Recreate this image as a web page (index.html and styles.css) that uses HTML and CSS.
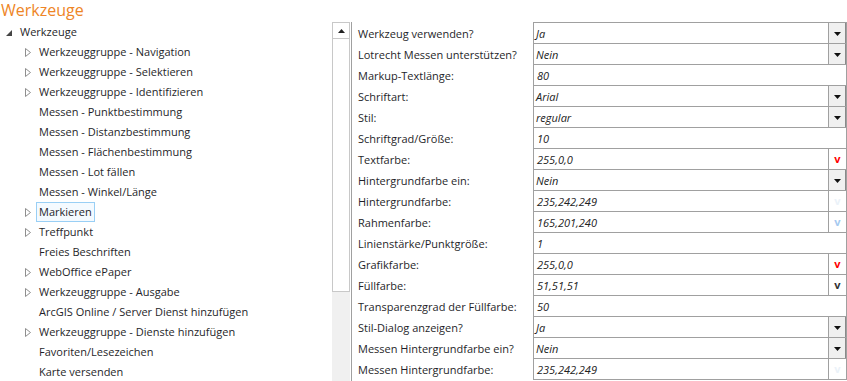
FILE: index.html
```html
<!DOCTYPE html>
<html lang="de">
<head>
  <meta charset="UTF-8">
  <title>Werkzeuge</title>
  <link rel="stylesheet" href="styles.css">
</head>
<body>
  <div class="title">Werkzeuge</div>

  <div class="main">
    <!-- Tree of tools -->
    <div class="tree">
      <div class="tree-item root">
        <span class="toggle"><svg width="6" height="6" viewBox="0 0 6 6"><polygon points="6,0 6,6 0,6" fill="#454545"/></svg></span>
        <span class="label">Werkzeuge</span>
      </div>
      <div class="tree-item">
        <span class="toggle"><svg width="6" height="9" viewBox="0 0 6 9"><polygon points="0.5,0.5 5.5,4.5 0.5,8.5" fill="none" stroke="#8f8f8f"/></svg></span>
        <span class="label">Werkzeuggruppe - Navigation</span>
      </div>
      <div class="tree-item">
        <span class="toggle"><svg width="6" height="9" viewBox="0 0 6 9"><polygon points="0.5,0.5 5.5,4.5 0.5,8.5" fill="none" stroke="#8f8f8f"/></svg></span>
        <span class="label">Werkzeuggruppe - Selektieren</span>
      </div>
      <div class="tree-item">
        <span class="toggle"><svg width="6" height="9" viewBox="0 0 6 9"><polygon points="0.5,0.5 5.5,4.5 0.5,8.5" fill="none" stroke="#8f8f8f"/></svg></span>
        <span class="label">Werkzeuggruppe - Identifizieren</span>
      </div>
      <div class="tree-item"><span class="toggle"></span><span class="label">Messen - Punktbestimmung</span></div>
      <div class="tree-item"><span class="toggle"></span><span class="label">Messen - Distanzbestimmung</span></div>
      <div class="tree-item"><span class="toggle"></span><span class="label">Messen - Flächenbestimmung</span></div>
      <div class="tree-item"><span class="toggle"></span><span class="label">Messen - Lot fällen</span></div>
      <div class="tree-item"><span class="toggle"></span><span class="label">Messen - Winkel/Länge</span></div>
      <div class="tree-item">
        <span class="toggle"><svg width="6" height="9" viewBox="0 0 6 9"><polygon points="0.5,0.5 5.5,4.5 0.5,8.5" fill="none" stroke="#8f8f8f"/></svg></span>
        <span class="label selected">Markieren</span>
      </div>
      <div class="tree-item">
        <span class="toggle"><svg width="6" height="9" viewBox="0 0 6 9"><polygon points="0.5,0.5 5.5,4.5 0.5,8.5" fill="none" stroke="#8f8f8f"/></svg></span>
        <span class="label">Treffpunkt</span>
      </div>
      <div class="tree-item"><span class="toggle"></span><span class="label">Freies Beschriften</span></div>
      <div class="tree-item">
        <span class="toggle"><svg width="6" height="9" viewBox="0 0 6 9"><polygon points="0.5,0.5 5.5,4.5 0.5,8.5" fill="none" stroke="#8f8f8f"/></svg></span>
        <span class="label">WebOffice ePaper</span>
      </div>
      <div class="tree-item">
        <span class="toggle"><svg width="6" height="9" viewBox="0 0 6 9"><polygon points="0.5,0.5 5.5,4.5 0.5,8.5" fill="none" stroke="#8f8f8f"/></svg></span>
        <span class="label">Werkzeuggruppe - Ausgabe</span>
      </div>
      <div class="tree-item"><span class="toggle"></span><span class="label">ArcGIS Online / Server Dienst hinzufügen</span></div>
      <div class="tree-item">
        <span class="toggle"><svg width="6" height="9" viewBox="0 0 6 9"><polygon points="0.5,0.5 5.5,4.5 0.5,8.5" fill="none" stroke="#8f8f8f"/></svg></span>
        <span class="label">Werkzeuggruppe - Dienste hinzufügen</span>
      </div>
      <div class="tree-item"><span class="toggle"></span><span class="label">Favoriten/Lesezeichen</span></div>
      <div class="tree-item"><span class="toggle"></span><span class="label">Karte versenden</span></div>
    </div>

    <!-- Scrollbar -->
    <div class="scrollbar">
      <div class="scroll-thumb">
        <div class="scroll-up"><svg width="7" height="4" viewBox="0 0 7 4"><polygon points="0,4 7,4 3.5,0" fill="#222"/></svg></div>
      </div>
      <div class="scroll-track"></div>
    </div>

    <!-- Property grid -->
    <div class="props">
      <div class="prop">
        <div class="prop-label">Werkzeug verwenden?</div>
        <div class="prop-value"><span class="val">Ja</span><span class="drop"><svg width="7" height="4" viewBox="0 0 7 4"><polygon points="0,0 7,0 3.5,4" fill="#111"/></svg></span></div>
      </div>
      <div class="prop">
        <div class="prop-label">Lotrecht Messen unterstützen?</div>
        <div class="prop-value"><span class="val">Nein</span><span class="drop"><svg width="7" height="4" viewBox="0 0 7 4"><polygon points="0,0 7,0 3.5,4" fill="#111"/></svg></span></div>
      </div>
      <div class="prop">
        <div class="prop-label">Markup-Textlänge:</div>
        <div class="prop-value"><span class="val text">80</span></div>
      </div>
      <div class="prop">
        <div class="prop-label">Schriftart:</div>
        <div class="prop-value"><span class="val">Arial</span><span class="drop"><svg width="7" height="4" viewBox="0 0 7 4"><polygon points="0,0 7,0 3.5,4" fill="#111"/></svg></span></div>
      </div>
      <div class="prop">
        <div class="prop-label">Stil:</div>
        <div class="prop-value"><span class="val">regular</span><span class="drop"><svg width="7" height="4" viewBox="0 0 7 4"><polygon points="0,0 7,0 3.5,4" fill="#111"/></svg></span></div>
      </div>
      <div class="prop">
        <div class="prop-label">Schriftgrad/Größe:</div>
        <div class="prop-value"><span class="val text">10</span></div>
      </div>
      <div class="prop">
        <div class="prop-label">Textfarbe:</div>
        <div class="prop-value"><span class="val text">255,0,0</span><span class="swatch" style="color: rgb(255,0,0)">v</span></div>
      </div>
      <div class="prop">
        <div class="prop-label">Hintergrundfarbe ein:</div>
        <div class="prop-value"><span class="val">Nein</span><span class="drop"><svg width="7" height="4" viewBox="0 0 7 4"><polygon points="0,0 7,0 3.5,4" fill="#111"/></svg></span></div>
      </div>
      <div class="prop">
        <div class="prop-label">Hintergrundfarbe:</div>
        <div class="prop-value"><span class="val text">235,242,249</span><span class="swatch" style="color: rgb(235,242,249)">v</span></div>
      </div>
      <div class="prop">
        <div class="prop-label">Rahmenfarbe:</div>
        <div class="prop-value"><span class="val text">165,201,240</span><span class="swatch" style="color: rgb(165,201,240)">v</span></div>
      </div>
      <div class="prop">
        <div class="prop-label">Linienstärke/Punktgröße:</div>
        <div class="prop-value"><span class="val text">1</span></div>
      </div>
      <div class="prop">
        <div class="prop-label">Grafikfarbe:</div>
        <div class="prop-value"><span class="val text">255,0,0</span><span class="swatch" style="color: rgb(255,0,0)">v</span></div>
      </div>
      <div class="prop">
        <div class="prop-label">Füllfarbe:</div>
        <div class="prop-value"><span class="val text">51,51,51</span><span class="swatch" style="color: rgb(51,51,51)">v</span></div>
      </div>
      <div class="prop">
        <div class="prop-label">Transparenzgrad der Füllfarbe:</div>
        <div class="prop-value"><span class="val text">50</span></div>
      </div>
      <div class="prop">
        <div class="prop-label">Stil-Dialog anzeigen?</div>
        <div class="prop-value"><span class="val">Ja</span><span class="drop"><svg width="7" height="4" viewBox="0 0 7 4"><polygon points="0,0 7,0 3.5,4" fill="#111"/></svg></span></div>
      </div>
      <div class="prop">
        <div class="prop-label">Messen Hintergrundfarbe ein?</div>
        <div class="prop-value"><span class="val">Nein</span><span class="drop"><svg width="7" height="4" viewBox="0 0 7 4"><polygon points="0,0 7,0 3.5,4" fill="#111"/></svg></span></div>
      </div>
      <div class="prop">
        <div class="prop-label">Messen Hintergrundfarbe:</div>
        <div class="prop-value"><span class="val text">235,242,249</span><span class="swatch" style="color: rgb(235,242,249)">v</span></div>
      </div>
    </div>
  </div>
</body>
</html>
```

FILE: styles.css
```css
:root {
  --orange: #ee8526;
  --text: #1f1f2a;
  --line: #a0a0a0;
  --select-border: #99cff5;
  --select-bg: #f4faff;
}

* {
  box-sizing: border-box;
}

body {
  margin: 0;
  width: 847px;
  height: 381px;
  overflow: hidden;
  background: #fff;
  font-family: 'Open Sans', 'Noto Sans', sans-serif;
  font-size: 11px;
  color: var(--text);
}

.title {
  height: 22px;
  padding-left: 1px;
  font-size: 16px;
  line-height: 20px;
  font-weight: 400;
  color: var(--orange);
}

.main {
  display: flex;
  height: 359px;
}

/* Tree */
.tree {
  width: 332px;
}

.tree-item {
  display: flex;
  align-items: center;
  height: 20px;
  padding-left: 25px;
}

.tree-item.root {
  padding-left: 6px;
}

.toggle {
  width: 6px;
  height: 9px;
  display: flex;
  align-items: center;
  margin-right: 5px;
}

.toggle svg {
  display: block;
}

.tree-item.root .toggle {
  margin-right: 5px;
  margin-top: 1px;
}

.label {
  height: 20px;
  line-height: 18px;
  padding: 0 2px;
  border: 1px solid transparent;
  white-space: nowrap;
}

.label.selected {
  border-color: var(--select-border);
  background: var(--select-bg);
}

/* Scrollbar */
.scrollbar {
  width: 18px;
  margin-right: 1px;
  display: flex;
  flex-direction: column;
}

.scroll-thumb {
  height: 270px;
  border: 1px solid #c8c8c8;
  background: #fff;
}

.scroll-up {
  height: 16px;
  border-bottom: 1px solid #c8c8c8;
  display: flex;
  align-items: center;
  justify-content: center;
}

.scroll-up svg {
  display: block;
}

.scroll-track {
  flex: 1;
  background: #f0f0f0;
}

/* Property grid */
.props {
  flex: 1;
  border-left: 1px solid var(--line);
}

.prop {
  display: flex;
  height: 21px;
}

.prop:first-child {
  height: 22px;
}

.prop-label {
  width: 181px;
  padding-left: 6px;
  display: flex;
  align-items: center;
  white-space: nowrap;
}

.prop-value {
  flex: 1;
  display: flex;
  border: 1px solid var(--line);
  border-top: none;
}

.prop:first-child .prop-value {
  border-top: 1px solid var(--line);
}

.val {
  flex: 1;
  padding-left: 2px;
  display: flex;
  align-items: center;
  font-style: italic;
  color: #222;
}

.val.text {
  padding-left: 3px;
}

.drop {
  width: 18px;
  display: flex;
  align-items: center;
  justify-content: center;
  background: #f0f0f0;
  border-left: 1px solid var(--line);
  border-right: 1px solid #8a8a8a;
}

.drop svg {
  display: block;
  margin-top: 1px;
}

.swatch {
  width: 18px;
  display: flex;
  align-items: center;
  justify-content: center;
  border-left: 1px solid var(--line);
  font-weight: bold;
  font-size: 11px;
  padding-bottom: 2px;
}
```
